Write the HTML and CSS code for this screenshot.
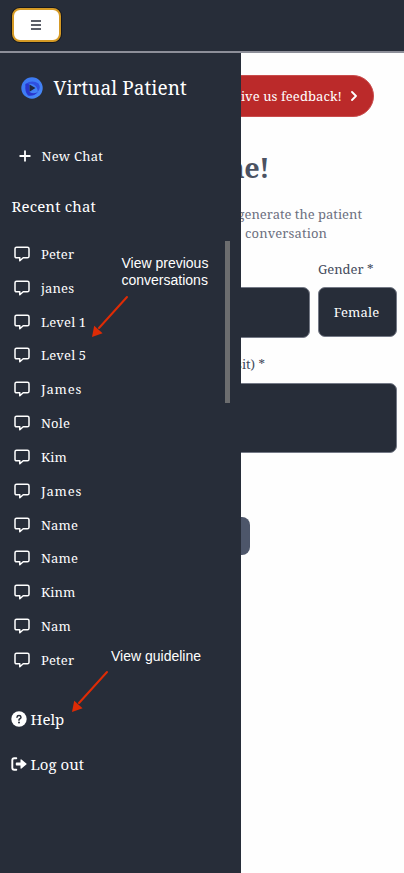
FILE: index.html
```html
<!DOCTYPE html>
<html lang="en">
<head>
<meta charset="utf-8">
<title>Virtual Patient</title>
<link rel="stylesheet" href="styles.css">
</head>
<body>
<svg class="defs" aria-hidden="true">
  <symbol id="chat" viewBox="0 0 16 16"><path d="M2.600 1.200h10.800q1.600 0 1.600 1.600v7.400q0 1.600-1.600 1.600H9.200L5.800 14.700v-2.900H2.600Q1 11.800 1 10.200V2.800Q1 1.200 2.600 1.200Z" fill="none" stroke="currentColor" stroke-width="1.500" stroke-linejoin="round"/></symbol>
</svg>
<header class="topbar">
  <button class="menu" aria-label="Menu"><svg width="10" height="10" viewBox="0 0 10 10"><path d="M0 1h10M0 5h10M0 9h10" stroke="#272d39" stroke-width="1.500"/></svg></button>
</header>
<div class="page">
  <main class="content">
    <a class="feedback"><span>Give us feedback!</span><svg width="8" height="10" viewBox="0 0 8 10"><path d="M2 1l4 4-4 4" fill="none" stroke="#fff" stroke-width="1.800" stroke-linecap="round" stroke-linejoin="round"/></svg></a>
    <h1>Welcome!</h1>
    <p class="intro"><span class="line first">generate the patient</span><span class="line second">conversation</span></p>
    <div class="fields">
      <div class="name-field"></div>
      <div class="gender-field"><label>Gender *</label><div class="select">Female</div></div>
    </div>
    <label class="visit">(visit) *</label>
    <div class="textarea"></div>
    <button class="submit" aria-label="Submit"></button>
  </main>
  <aside class="sidebar">
    <div class="brand">
      <svg width="22" height="22" viewBox="0 0 22 22"><defs><linearGradient id="g" x1="0" y1="0" x2="1" y2="1"><stop offset="0" stop-color="#3b78f2"/><stop offset=".5" stop-color="#3f7df5"/><stop offset="1" stop-color="#4a8cf8"/></linearGradient></defs><circle cx="11" cy="11" r="10.700" fill="url(#g)"/><path d="M4.500 7Q11 2.500 17.500 6.500Q20.500 11 16.500 15Q17 10 12.500 7.500Q8 5.500 4.500 9Z" fill="#2f50df"/><path d="M4.500 7Q3.500 15 7 18.500Q12 20 17 15Q11 17.500 8.300 14.700V7.500Q6.500 6 4.500 7Z" fill="#2936cc"/><path d="M8.500 7.500L14.500 11L8.500 14.700Z" fill="#20283e"/></svg>
      <span>Virtual Patient</span>
    </div>
    <div class="new-chat"><svg width="12" height="12" viewBox="0 0 12 12"><path d="M6 1.200v9.600M1.200 6h9.600" stroke="#fff" stroke-width="1.800" stroke-linecap="round"/></svg><span>New Chat</span></div>
    <h2>Recent chat</h2>
    <ul class="chats">
      <li><svg><use href="#chat"/></svg><span>Peter</span></li>
      <li><svg><use href="#chat"/></svg><span>janes</span></li>
      <li><svg><use href="#chat"/></svg><span>Level 1</span></li>
      <li><svg><use href="#chat"/></svg><span>Level 5</span></li>
      <li><svg><use href="#chat"/></svg><span class="wide">James</span></li>
      <li><svg><use href="#chat"/></svg><span>Nole</span></li>
      <li><svg><use href="#chat"/></svg><span>Kim</span></li>
      <li><svg><use href="#chat"/></svg><span class="wide">James</span></li>
      <li><svg><use href="#chat"/></svg><span>Name</span></li>
      <li><svg><use href="#chat"/></svg><span>Name</span></li>
      <li><svg><use href="#chat"/></svg><span>Kinm</span></li>
      <li><svg><use href="#chat"/></svg><span>Nam</span></li>
      <li><svg><use href="#chat"/></svg><span>Peter</span></li>
    </ul>
    <nav class="links">
      <a><svg width="16" height="16" viewBox="0 0 16 16"><circle cx="8" cy="8" r="7.700" fill="#fff"/><path d="M6 6.200Q6.100 4.500 8 4.500T10 6.200Q10 7.200 8.900 7.700T8 9.200" fill="none" stroke="#272d39" stroke-width="1.500" stroke-linecap="round"/><circle cx="8" cy="11.500" r="1" fill="#272d39"/></svg><span>Help</span></a>
      <a><svg width="16" height="16" viewBox="0 0 16 16"><path d="M5.300 2.300H3.200Q1.300 2.300 1.300 4.200v7.600q0 1.900 1.900 1.900h2.100" fill="none" stroke="#fff" stroke-width="1.900" stroke-linecap="round"/><path d="M5.500 6.500h4V4q0-1.200 1-.4l4.800 3.800q.7.600 0 1.200l-4.800 3.800q-1 .8-1-.4V9.500h-4q-.7 0-.7-.7V7.200q0-.7.7-.7Z" fill="#fff"/></svg><span>Log out</span></a>
    </nav>
    <div class="scrollbar"></div>
    <p class="note previous">View previous<br>conversations</p>
    <svg class="arrow one" width="38" height="43" viewBox="0 0 38 43"><path d="M36 2L8 33" stroke="#de2b05" stroke-width="2" stroke-linecap="round"/><path d="M1 42L3.200 30.700L11.600 38.200Z" fill="#de2b05"/></svg>
    <p class="note guide">View guideline</p>
    <svg class="arrow two" width="38" height="43" viewBox="0 0 38 43"><path d="M36 2L8 33" stroke="#de2b05" stroke-width="2" stroke-linecap="round"/><path d="M1 42L3.200 30.700L11.600 38.200Z" fill="#de2b05"/></svg>
  </aside>
</div>
</body>
</html>
```
FILE: styles.css
```css
* { box-sizing: border-box; }
body { margin: 0; height: 873px; overflow: hidden; background: #fefefe; color: #454c5d; font: 13px/20px "Noto Serif", "DejaVu Serif Condensed", "DejaVu Serif", serif; font-stretch: condensed; white-space: nowrap; display: flex; flex-direction: column; }
h1, h2, p, ul { margin: 0; padding: 0; font-weight: 400; }
svg { display: block; flex: none; }
button { border: 0; padding: 0; }
.defs { position: absolute; width: 0; height: 0; }
.topbar { height: 53px; flex: none; padding: 8px 12px 8px 11.500px; background: #272d39; border-bottom: 2px solid #8d8f99; }
.menu { width: 49px; height: 34px; display: grid; place-items: center; background: #fff; border: 2px solid #d59a25; border-radius: 8px; box-shadow: 0 0 0 1px #17191e; }
.menu svg { margin-right: 1px; }
.page { position: relative; flex: 1; }
.content { padding: 22px 7px 0 8px; display: flex; flex-direction: column; }
.feedback { width: 344px; height: 42px; margin-left: 22px; padding-right: 15px; display: flex; align-items: center; justify-content: flex-end; gap: 8px; border-radius: 21px; background: #bb2a2a; border: 1px solid #c94c4c; color: #fff; letter-spacing: .08px; }
h1 { height: 40px; margin-top: 31px; padding-right: 128px; text-align: right; font-size: 27px; line-height: 40px; font-weight: 700; letter-spacing: -.5px; color: #4b5262; }
.intro { margin-top: 17px; color: #6c7080; text-align: right; line-height: 19px; }
.line { display: block; }
.first { padding-right: 35px; }
.second { padding-right: 70px; letter-spacing: .1px; }
.fields { display: flex; gap: 8px; margin-top: 15px; height: 80px; }
.name-field { flex: 1; height: 51px; margin-top: 29px; background: #272d39; border: 1px solid #747986; border-radius: 7px; }
.gender-field { width: 79px; }
.gender-field label { display: block; height: 29px; line-height: 22px; }
.select { height: 50px; padding-right: 2px; display: grid; place-items: center; background: #272d39; border: 1px solid #747986; border-radius: 7px; color: #fff; letter-spacing: .15px; }
.visit { display: block; height: 20px; margin-top: 16px; padding-right: 132px; text-align: right; }
.textarea { height: 70px; margin-top: 9px; background: #272d39; border: 1px solid #747986; border-radius: 7px; }
.submit { width: 96px; height: 38px; margin: 64px 0 0 146px; border-radius: 8px; background: #4d566a; }
.sidebar { position: absolute; left: 0; top: 0; width: 241px; height: 820px; background: #272d39; color: #fff; }
.brand { height: 26px; margin: 22px 0 0 20.500px; display: flex; align-items: center; gap: 11px; font-size: 19px; line-height: 26px; letter-spacing: .07px; }
.new-chat { height: 20px; margin: 45px 0 0 18.500px; display: flex; align-items: center; gap: 11px; letter-spacing: .25px; }
h2 { height: 22px; margin: 29px 0 0 11.500px; font-size: 15px; line-height: 22px; letter-spacing: .15px; }
.chats { margin-top: 20px; padding-left: 14px; list-style: none; letter-spacing: .15px; }
.chats li { height: 33.830px; display: flex; align-items: center; gap: 11px; }
.chats svg { width: 16px; height: 16px; }
.wide { letter-spacing: .8px; }
.links { margin: 30px 0 0 10.500px; display: grid; gap: 21px; font-size: 15px; line-height: 24px; }
.links a { display: flex; align-items: center; gap: 4px; }
.scrollbar { position: absolute; left: 225px; top: 188px; width: 5px; height: 162px; background: #6c6d6f; }
.note { position: absolute; font: 14px/17px "Liberation Sans", Arial, sans-serif; }
.previous { left: 121.500px; top: 202px; }
.guide { left: 111px; top: 595px; }
.arrow { position: absolute; }
.one { left: 91px; top: 242px; }
.two { left: 71px; top: 617px; }
```
